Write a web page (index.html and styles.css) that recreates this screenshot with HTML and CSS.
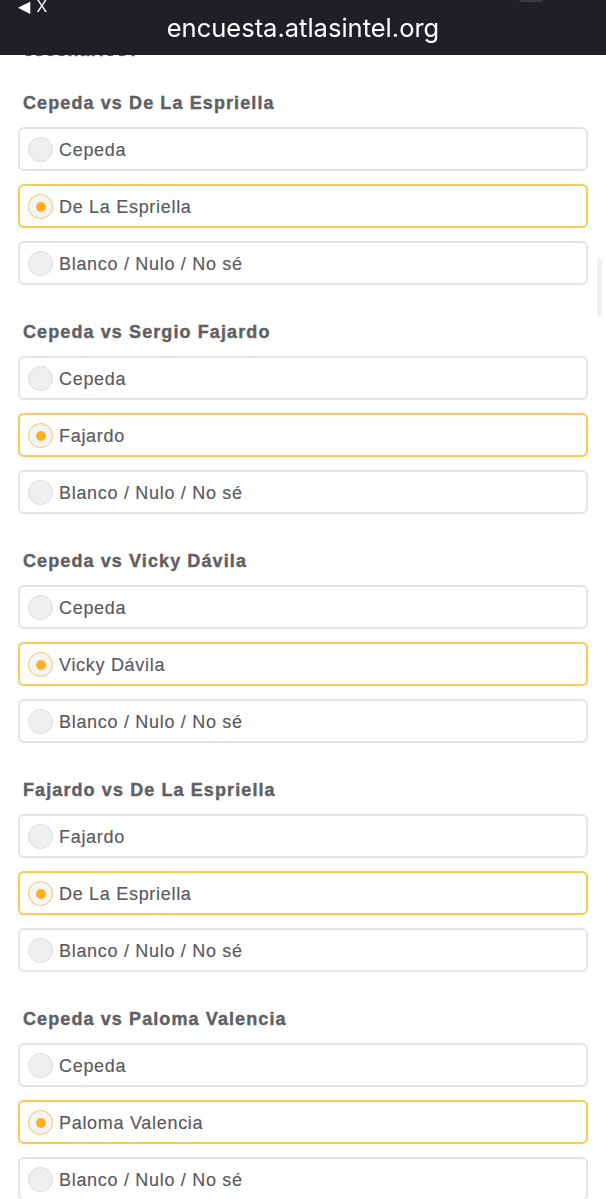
FILE: index.html
```html
<!DOCTYPE html>
<html lang="es">
<head>
<meta charset="utf-8">
<title>encuesta.atlasintel.org</title>
<link rel="stylesheet" href="styles.css">
</head>
<body>
<header class="topbar">
  <span class="back">&#9664;&#xFE0E; X</span>
  <span class="url">encuesta.atlasintel.org</span>
  <span class="notch"></span>
</header>
<div class="scrollbar"></div>

<main class="survey">
  <h2 class="question prev">escenarios?</h2>

  <section class="group">
    <h3 class="question">Cepeda vs De La Espriella</h3>
    <div class="options">
      <label class="option"><span class="radio"></span><span class="text">Cepeda</span></label>
      <label class="option selected"><span class="radio"></span><span class="text">De La Espriella</span></label>
      <label class="option"><span class="radio"></span><span class="text">Blanco / Nulo / No sé</span></label>
    </div>
  </section>

  <section class="group">
    <h3 class="question">Cepeda vs Sergio Fajardo</h3>
    <div class="options">
      <label class="option"><span class="radio"></span><span class="text">Cepeda</span></label>
      <label class="option selected"><span class="radio"></span><span class="text">Fajardo</span></label>
      <label class="option"><span class="radio"></span><span class="text">Blanco / Nulo / No sé</span></label>
    </div>
  </section>

  <section class="group">
    <h3 class="question">Cepeda vs Vicky Dávila</h3>
    <div class="options">
      <label class="option"><span class="radio"></span><span class="text">Cepeda</span></label>
      <label class="option selected"><span class="radio"></span><span class="text">Vicky Dávila</span></label>
      <label class="option"><span class="radio"></span><span class="text">Blanco / Nulo / No sé</span></label>
    </div>
  </section>

  <section class="group">
    <h3 class="question">Fajardo vs De La Espriella</h3>
    <div class="options">
      <label class="option"><span class="radio"></span><span class="text">Fajardo</span></label>
      <label class="option selected"><span class="radio"></span><span class="text">De La Espriella</span></label>
      <label class="option"><span class="radio"></span><span class="text">Blanco / Nulo / No sé</span></label>
    </div>
  </section>

  <section class="group">
    <h3 class="question">Cepeda vs Paloma Valencia</h3>
    <div class="options">
      <label class="option"><span class="radio"></span><span class="text">Cepeda</span></label>
      <label class="option selected"><span class="radio"></span><span class="text">Paloma Valencia</span></label>
      <label class="option"><span class="radio"></span><span class="text">Blanco / Nulo / No sé</span></label>
    </div>
  </section>
</main>
</body>
</html>
```
FILE: styles.css
```css
* { box-sizing: border-box; }

html, body {
  margin: 0;
  padding: 0;
  background: #ffffff;
}

body {
  font-family: "Liberation Sans", Arial, sans-serif;
  color: #5a5b5f;
  overflow: hidden;
}

.topbar {
  position: fixed;
  top: 0;
  left: 0;
  right: 0;
  height: 55px;
  background: #1f2024;
  z-index: 10;
  display: flex;
  align-items: center;
  justify-content: center;
}

.back {
  position: absolute;
  left: 18px;
  top: 0;
  font-family: "Liberation Sans", Arial, sans-serif;
  font-size: 16px;
  line-height: 14px;
  color: #ffffff;
  letter-spacing: 1px;
}

.url {
  font-family: "Inter", "Liberation Sans", sans-serif;
  font-size: 25.5px;
  line-height: 30px;
  color: #ffffff;
  margin-top: 1px;
}

.notch {
  position: absolute;
  top: -4px;
  left: 519px;
  width: 24px;
  height: 6px;
  border-radius: 3px;
  background: #3c3d41;
}

.scrollbar {
  position: fixed;
  left: 597px;
  top: 258px;
  width: 5px;
  height: 58px;
  border-radius: 3px;
  background: #f0f0f2;
  z-index: 5;
}

.survey {
  padding: 40px 18px 0 18px;
  display: flex;
  flex-direction: column;
}

.question {
  margin: 0;
  padding-left: 5px;
  font-family: "Liberation Sans", Arial, sans-serif;
  font-weight: 700;
  font-size: 18px;
  line-height: 20px;
  letter-spacing: 1.1px;
  color: #5e6064;
  -webkit-text-stroke: 0.4px #5e6064;
}

.question.prev {
  margin-bottom: 33px;
}

.group {
  display: flex;
  flex-direction: column;
  gap: 14px;
  margin-bottom: 37px;
}

.options {
  display: flex;
  flex-direction: column;
  gap: 13px;
}

.option {
  height: 44px;
  border: 2px solid #e4e4e7;
  border-radius: 6px;
  display: flex;
  align-items: center;
  padding-left: 8px;
  padding-top: 1px;
  gap: 6px;
  background: #ffffff;
}

.option.selected {
  border-color: #f7ca5e;
  box-shadow: 0 0 2px rgba(247, 190, 70, 0.35);
}

.radio {
  width: 25px;
  height: 25px;
  border-radius: 50%;
  background: #efeff1;
  border: 1px solid #dcdce0;
  display: flex;
  align-items: center;
  justify-content: center;
  flex: none;
}

.option.selected .radio {
  border: 1.5px solid #f6c565;
  background: #f4f4f5;
}

.option.selected .radio::after {
  content: "";
  width: 10px;
  height: 10px;
  border-radius: 50%;
  background: #fbb023;
}

.text {
  font-size: 18px;
  line-height: 22px;
  letter-spacing: 0.7px;
  color: #58595d;
  -webkit-text-stroke: 0.15px #58595d;
}
```
